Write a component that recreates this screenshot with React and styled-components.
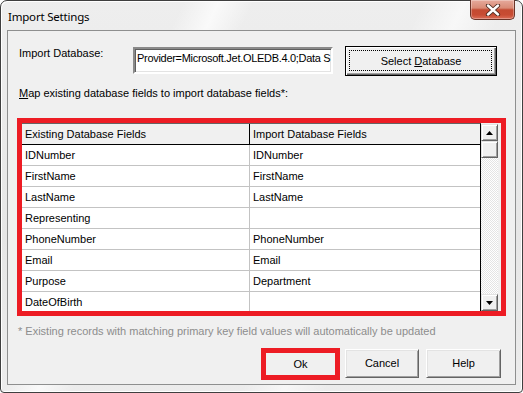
import React from 'react';
import styled, { createGlobalStyle } from 'styled-components';

const Global = createGlobalStyle`
  html, body { margin: 0; padding: 0; background: #ffffff; }
  body { width: 523px; height: 393px; overflow: hidden; }
  * { box-sizing: border-box; }
`;

const UI = `"Liberation Sans", Arial, sans-serif`;

const Window = styled.div`
  width: 523px;
  height: 393px;
  border: 1px solid #3f3f3f;
  border-radius: 7px 7px 4px 4px;
  background:
    linear-gradient(115deg, rgba(255,255,255,0) 0%, rgba(255,255,255,0) 26%, rgba(255,255,255,0.7) 31%, rgba(255,255,255,0) 36%, rgba(255,255,255,0) 60%, rgba(255,255,255,0.6) 66%, rgba(255,255,255,0) 72%),
    linear-gradient(180deg, #eeeeee 0%, #e6e6e6 60%, #ececec 100%);
  display: flex;
  flex-direction: column;
  padding: 0 6px 7px 6px;
  box-shadow: inset 1px 1px 0 #ffffff, inset -1px -1px 0 #ffffff;
`;

const TitleBar = styled.div`
  height: 29px;
  display: flex;
  align-items: flex-start;
  justify-content: space-between;
  padding-left: 1px;
`;

const Title = styled.div`
  font-family: "Noto Sans", "Open Sans", sans-serif;
  font-size: 11.5px;
  line-height: 16px;
  margin-top: 8px;
  color: #000;
  letter-spacing: -0.2px;
`;

const CloseButton = styled.div`
  width: 45px;
  height: 20px;
  margin-top: -1px;
  margin-right: 1px;
  border: 1px solid #6a3428;
  border-top: none;
  border-radius: 0 0 5px 5px;
  background: linear-gradient(180deg, #e6aa9c 0%, #d98b76 42%, #c44a31 52%, #c84c33 78%, #db6d57 100%);
  box-shadow: inset 0 0 0 1px rgba(255,255,255,0.3);
  display: flex;
  align-items: center;
  justify-content: center;
`;

const Client = styled.div`
  flex: 1;
  border: 1px solid #8e8f8f;
  background: #f0f0f0;
  padding: 15px 14px 0 11px;
  display: flex;
  flex-direction: column;
  font-family: ${UI};
  font-size: 11px;
  color: #000;
`;

const DbRow = styled.div`
  display: flex;
  align-items: flex-start;
  height: 30px;
`;

const Label = styled.div`
  width: 114px;
  line-height: 13px;
  margin-top: 1px;
`;

const TextBox = styled.div`
  width: 200px;
  height: 27px;
  margin-top: 1px;
  background: #fff;
  border-style: solid;
  border-width: 2px;
  border-color: #8a8a8a #ffffff #ffffff #8a8a8a;
  box-shadow: inset 1px 1px 0 #5f5f5f, inset -1px -1px 0 #e3e3e3;
  padding: 3px 0 0 2px;
  white-space: nowrap;
  overflow: hidden;
  line-height: 13px;
  letter-spacing: -0.3px;
`;

const Button = styled.div`
  position: relative;
  width: ${p => p.$w}px;
  height: ${p => p.$h}px;
  margin-left: ${p => p.$ml || 0}px;
  background: #f0f0f0;
  border: 1px solid;
  border-color: ${p => p.$default ? '#000 #000 #000 #000' : '#ffffff #646464 #646464 #ffffff'};
  box-shadow: ${p => p.$default
    ? 'inset 1px 1px 0 #ffffff, inset -1px -1px 0 #646464, inset -2px -2px 0 #a0a0a0'
    : 'inset 1px 1px 0 #e3e3e3, inset -1px -1px 0 #a0a0a0'};
  display: flex;
  align-items: center;
  justify-content: center;
  line-height: 13px;
  font-family: ${UI};
  font-size: 11px;
`;

const Focus = styled.div`
  position: absolute;
  inset: 3px 4px 4px 3px;
  border: 1px dotted #000;
`;

const U = styled.span`
  text-decoration: underline;
  text-underline-offset: 1px;
`;

const MapLabel = styled.div`
  margin-top: 11px;
  line-height: 13px;
`;

const RedFrame = styled.div`
  margin-top: 18px;
  margin-left: -2px;
  width: 489px;
  height: 198px;
  border: 5px solid #ed1c24;
  display: flex;
  background: #f0f0f0;
`;

const Grid = styled.div`
  flex: 1;
  display: flex;
  flex-direction: column;
  background: #fff;
  border-top: 1px solid #646464;
  border-right: 1px solid #000;
  overflow: hidden;
`;

const HeaderRow = styled.div`
  display: flex;
  height: 21px;
  flex: none;
  background: #f0f0f0;
  border-bottom: 1px solid #000;
`;

const Row = styled.div`
  display: flex;
  height: 21px;
  flex: none;
  border-bottom: 1px solid #c3c3c3;
`;

const Cell = styled.div`
  width: ${p => p.$first ? '228px' : 'auto'};
  flex: ${p => p.$first ? 'none' : '1'};
  border-right: ${p => p.$first ? `1px solid ${p.$head ? '#000' : '#c3c3c3'}` : 'none'};
  padding-left: 3px;
  display: flex;
  align-items: center;
  white-space: nowrap;
  overflow: hidden;
`;

const ScrollBar = styled.div`
  width: 17px;
  margin-top: 1px;
  display: flex;
  flex-direction: column;
  background: repeating-conic-gradient(#e4e4e4 0 25%, #ffffff 0 50%) 0 0 / 2px 2px;
`;

const ScrollBtn = styled.div`
  width: 17px;
  height: 17px;
  flex: none;
  background: #f0f0f0;
  border: 1px solid;
  border-color: #e3e3e3 #646464 #646464 #e3e3e3;
  box-shadow: inset 1px 1px 0 #ffffff, inset -1px -1px 0 #a0a0a0;
  display: flex;
  align-items: center;
  justify-content: center;
`;

const Track = styled.div`
  flex: 1;
`;

const Gutter = styled.div`
  width: 3px;
  background: #f0f0f0;
`;

const Note = styled.div`
  margin-top: 9px;
  margin-left: -1px;
  color: #8d8d8d;
  line-height: 13px;
`;

const ButtonBar = styled.div`
  margin-top: 11px;
  display: flex;
  justify-content: flex-end;
  align-items: flex-start;
`;

const OkFrame = styled.div`
  width: 79px;
  height: 32px;
  margin-top: -1px;
  border: 5px solid #ed1c24;
  background: #f0f0f0;
  display: flex;
  align-items: center;
  justify-content: center;
  line-height: 13px;
`;

const Arrow = ({ down }) => (
  <svg width="7" height="4" viewBox="0 0 7 4">
    <path d={down ? 'M0 0H7L3.5 4Z' : 'M0 4H7L3.5 0Z'} fill="#000" />
  </svg>
);

const rows = [
  ['IDNumber', 'IDNumber'],
  ['FirstName', 'FirstName'],
  ['LastName', 'LastName'],
  ['Representing', ''],
  ['PhoneNumber', 'PhoneNumber'],
  ['Email', 'Email'],
  ['Purpose', 'Department'],
  ['DateOfBirth', ''],
];

export default function App() {
  return (
    <>
      <Global />
      <Window>
        <TitleBar>
          <Title>Import Settings</Title>
          <CloseButton>
            <svg width="16" height="12" viewBox="0 0 16 12">
              <path d="M3 1.5L13 10.5M13 1.5L3 10.5" stroke="#4a2a20" strokeWidth="4.2" strokeLinecap="round" />
              <path d="M3 1.5L13 10.5M13 1.5L3 10.5" stroke="#ffffff" strokeWidth="2.4" strokeLinecap="round" />
            </svg>
          </CloseButton>
        </TitleBar>
        <Client>
          <DbRow>
            <Label>Import Database:</Label>
            <TextBox>Provider=Microsoft.Jet.OLEDB.4.0;Data S</TextBox>
            <Button $w={152} $h={30} $ml={12} $default>
              <Focus />
              <span>Select <U>D</U>atabase</span>
            </Button>
          </DbRow>
          <MapLabel><U>M</U>ap existing database fields to import database fields*:</MapLabel>
          <RedFrame>
            <Grid>
              <HeaderRow>
                <Cell $first $head>Existing Database Fields</Cell>
                <Cell>Import Database Fields</Cell>
              </HeaderRow>
              {rows.map(([a, b]) => (
                <Row key={a}>
                  <Cell $first>{a}</Cell>
                  <Cell>{b}</Cell>
                </Row>
              ))}
            </Grid>
            <ScrollBar>
              <ScrollBtn><Arrow /></ScrollBtn>
              <ScrollBtn />
              <Track />
              <ScrollBtn><Arrow down /></ScrollBtn>
            </ScrollBar>
            <Gutter />
          </RedFrame>
          <Note>* Existing records with matching primary key field values will automatically be updated</Note>
          <ButtonBar>
            <OkFrame>Ok</OkFrame>
            <Button $w={74} $h={29} $ml={5}>Cancel</Button>
            <Button $w={75} $h={29} $ml={7}>Help</Button>
          </ButtonBar>
        </Client>
      </Window>
    </>
  );
}
